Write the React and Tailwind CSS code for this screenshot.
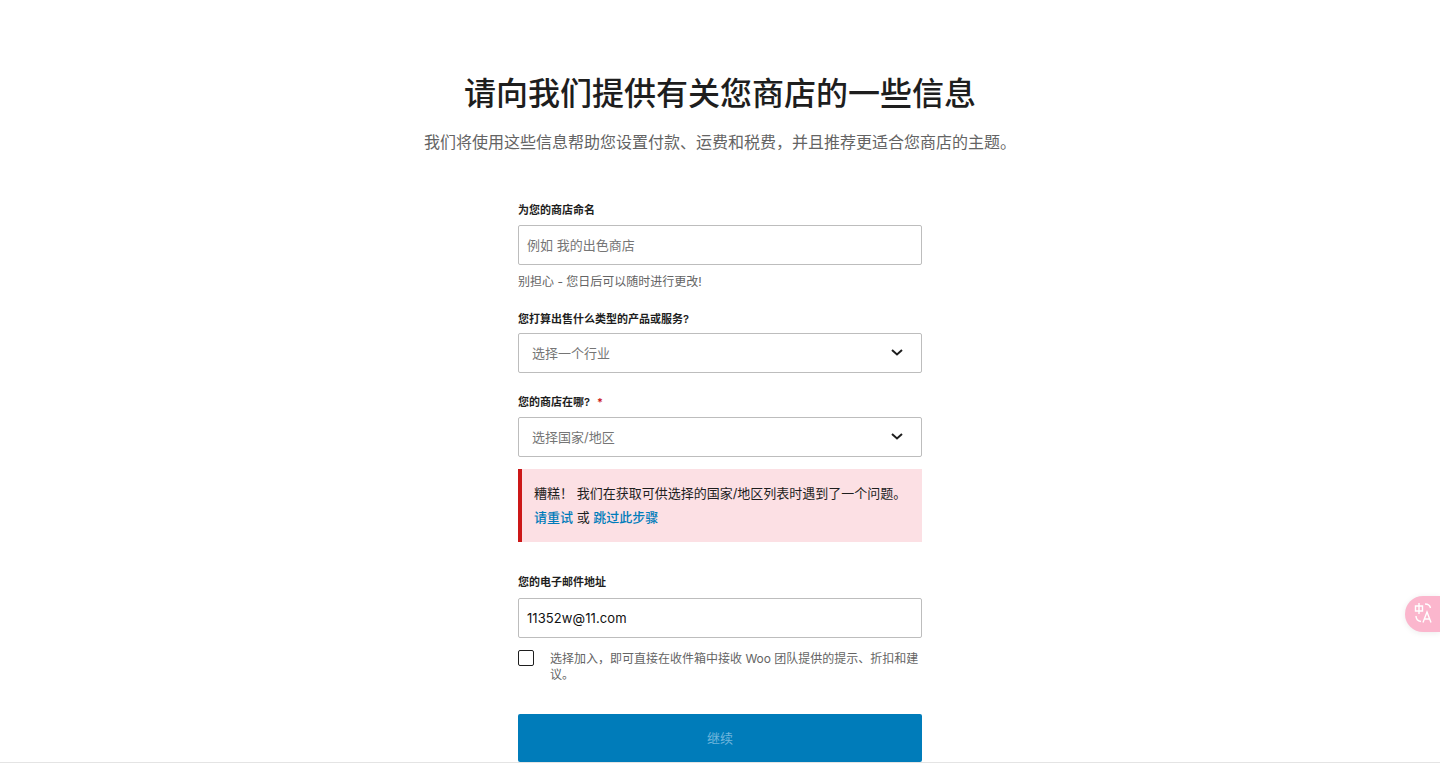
import React from "react";

const FONT = "font-['Inter','Noto_Sans_CJK_SC',sans-serif]";

function Chevron() {
  return (
    <svg width="14" height="9" viewBox="0 0 14 9" fill="none" className="shrink-0 -mt-[1px] translate-x-px">
      <path d="M2 2l5 4.5L12 2" stroke="#1e1e1e" strokeWidth="2" />
    </svg>
  );
}

function Label({ children, className = "" }) {
  return (
    <div className={`text-[11px] leading-[16px] font-semibold text-[#1e1e1e] ${className}`}>{children}</div>
  );
}

function Select({ text, className = "" }) {
  return (
    <div className={`h-10 rounded-[2px] border border-[#bdbdbd] bg-white flex items-center justify-between pl-[13px] pr-[18px] ${className}`}>
      <span className="text-[13px] text-[#757575] pt-[1px]">{text}</span>
      <Chevron />
    </div>
  );
}

export default function App() {
  return (
    <div className={`h-[763px] overflow-hidden relative bg-white ${FONT}`}>
      <div className="flex flex-col items-center pt-[72px]">
        <h1 className="text-[32px] leading-[44px] font-medium text-[#1e1e1e] m-0">请向我们提供有关您商店的一些信息</h1>
        <p className="text-[16px] leading-[24px] text-[#646464] mt-[14px]">{"我们将使用这些信息帮助您设置付款、运费和税费\uFF0C并且推荐更适合您商店的主题。"}</p>

        <div className="w-[404px] mt-[48px]">
          <Label>为您的商店命名</Label>
          <div className="h-10 rounded-[2px] border border-[#bdbdbd] bg-white flex items-center pl-2 mt-[7px]">
            <span className="text-[13px] text-[#757575] pt-px">例如 我的出色商店</span>
          </div>
          <p className="text-[12px] leading-[16px] text-[#646464] mt-[9px]">别担心 - 您日后可以随时进行更改!</p>

          <Label className="mt-[21px]">您打算出售什么类型的产品或服务?</Label>
          <Select text="选择一个行业" className="mt-[6px]" />

          <Label className="mt-[21px]">
            您的商店在哪?<span className="text-[#cc1818] ml-[7px]">*</span>
          </Label>
          <Select text="选择国家/地区" className="mt-[7px]" />

          <div className="mt-3 h-[73px] bg-[#fce0e4] border-l-[4px] border-[#cc1818] pl-3 pb-[2px] flex flex-col justify-center text-[13px] leading-[24px] text-[#1e1e1e]">
            <div className="whitespace-pre">{"糟糕\uFF01 我们在获取可供选择的国家/地区列表时遇到了一个问题。"}</div>
            <div>
              <span className="text-[#007cba] font-medium">请重试</span> 或 <span className="text-[#007cba] font-medium">跳过此步骤</span>
            </div>
          </div>

          <Label className="mt-[32px]">您的电子邮件地址</Label>
          <div className="h-10 rounded-[2px] border border-[#bdbdbd] bg-white flex items-center pl-2 mt-[8px]">
            <span className="text-[13px] tracking-[0.08px] text-[#111111] pt-px">11352w@11.com</span>
          </div>

          <div className="flex items-start mt-[12px]">
            <div className="w-4 h-4 rounded-[2px] border border-[#1e1e1e] shrink-0 bg-white" />
            <p className="ml-4 pt-px text-[12px] leading-[16px] text-[#646464]">{"选择加入\uFF0C即可直接在收件箱中接收 Woo 团队提供的提示、折扣和建议。"}</p>
          </div>

          <div className="mt-[31px] h-12 pt-[2px] rounded-[2px] bg-[#007cba] flex items-center justify-center text-[13px] text-[#70b6dc]">继续</div>
        </div>
      </div>

      <div className="absolute right-0 top-[596px] w-[35px] h-[36px] rounded-l-full bg-[#fbb6cd] flex items-center justify-center shadow-[0_1px_6px_rgba(0,0,0,0.08)]">
        <svg width="20" height="24" viewBox="0 0 20 24" fill="none" stroke="#fff" strokeWidth="1.4" className="ml-[2px]">
          <path d="M1.5 4h7v5h-7zM5 1v11" />
          <path d="M9 20.5l4-10.5 4 10.5M10.4 17h5.2" />
          <path d="M2 14c0 3 2 5 5 5.5M11 2c3 0 5 1.5 5.5 4" />
        </svg>
      </div>
      <div className="absolute left-0 right-0 bottom-0 h-px bg-[#e4e4e4]" />
    </div>
  );
}
